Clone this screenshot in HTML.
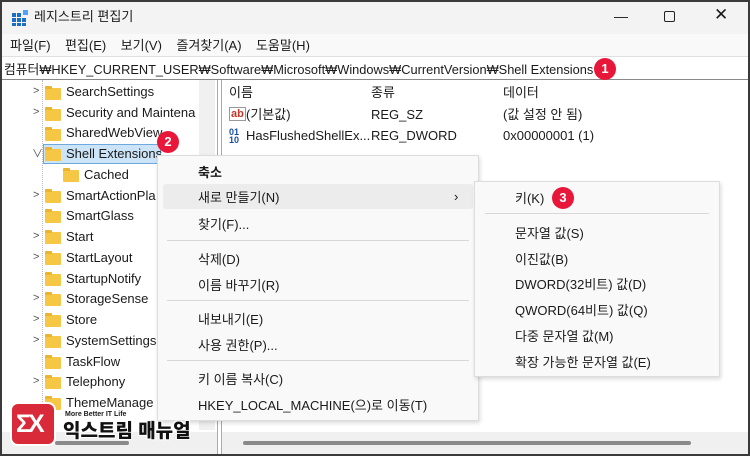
<!DOCTYPE html>
<html><head><meta charset="utf-8"><style>
*{margin:0;padding:0;box-sizing:border-box}
body{width:750px;height:456px;overflow:hidden;background:#3a3a3a;font-family:"Liberation Sans","Noto Sans CJK KR",sans-serif;font-size:13px;color:#1a1a1a;position:relative}
.win{position:absolute;left:2px;top:2px;width:746px;height:452px;background:#fff;overflow:hidden}
.a{position:absolute;white-space:nowrap;line-height:16px}
.fold{position:absolute;width:16px;height:12px;background:#f6c744;border-radius:1px}
.fold:before{content:"";position:absolute;left:0;top:-2px;width:7px;height:3px;background:#e9b430;border-radius:1px 1px 0 0}
.arr{position:absolute;color:#555;font-size:11px}
.badge{position:absolute;width:22px;height:22px;border-radius:50%;background:#e8173a;color:#fff;font-size:13px;font-weight:bold;text-align:center;line-height:22px}
.sep{position:absolute;height:1px;background:#d8d8d8}
</style></head><body>
<div class="win">
 <div style="position:absolute;left:0;top:0;width:746px;height:32px;background:#f3f3f3"></div>
 <svg style="position:absolute;left:9px;top:7px" width="18" height="18" viewBox="0 0 18 18"><g fill="#1a6fc4"><rect x="1" y="4" width="4" height="4"/><rect x="6" y="4" width="4" height="4"/><rect x="1" y="9" width="4" height="4"/><rect x="6" y="9" width="4" height="4"/><rect x="11" y="9" width="4" height="4"/><rect x="1" y="14" width="4" height="3"/><rect x="6" y="14" width="4" height="3"/><rect x="11" y="14" width="4" height="3"/></g><rect x="12" y="1" width="5" height="5" fill="#4aa3ff"/></svg>
 <div class="a" style="left:32px;top:7px;font-size:13px">레지스트리 편집기</div>
 <div class="a" style="left:612px;top:6px;font-size:14px">—</div>
 <div style="position:absolute;left:662px;top:9px;width:11px;height:11px;border:1.3px solid #222;border-radius:2px"></div>
 <div class="a" style="left:712px;top:5px;font-size:17px;font-weight:300">✕</div>
 <div style="position:absolute;left:0;top:32px;width:746px;height:22px;background:#f9f9f9"></div>
 <div class="a" style="left:8px;top:36px">파일(F)&nbsp;&nbsp;&nbsp; 편집(E)&nbsp;&nbsp;&nbsp; 보기(V)&nbsp;&nbsp;&nbsp; 즐겨찾기(A)&nbsp;&nbsp;&nbsp; 도움말(H)</div>
 <div style="position:absolute;left:0;top:54px;width:746px;height:1px;background:#e0e0e0"></div>
 <div class="a" style="left:2px;top:60px;font-size:12.8px">컴퓨터₩HKEY_CURRENT_USER₩Software₩Microsoft₩Windows₩CurrentVersion₩Shell Extensions</div>
 <div style="position:absolute;left:0;top:77px;width:746px;height:1px;background:#888"></div>
 <div style="position:absolute;left:197px;top:78px;width:16px;height:350px;background:#f0f0f0"></div>
 <div style="position:absolute;left:215px;top:78px;width:1px;height:374px;background:#aaa"></div>
 <div style="position:absolute;left:219px;top:78px;width:1px;height:374px;background:#aaa"></div>
 <div style="position:absolute;left:0;top:430px;width:215px;height:22px;background:#f0f0f0"></div>
 <div style="position:absolute;left:53px;top:439px;width:74px;height:4px;background:#8a8a8a;border-radius:2px"></div>
 <div style="position:absolute;left:220px;top:430px;width:526px;height:22px;background:#f0f0f0"></div>
 <div style="position:absolute;left:241px;top:439px;width:448px;height:4px;background:#8a8a8a;border-radius:2px"></div>
 <div style="position:absolute;left:40px;top:78px;width:1px;height:352px;border-left:1px dotted #bbb"></div>
 <div style="position:absolute;left:41px;top:142px;width:118px;height:20px;background:#cce4f7;border:1px solid #6ea8dc"></div>
 <div class="arr" style="left:31px;top:83px">&gt;</div><div class="fold" style="left:43px;top:86px"></div><div class="a" style="left:64px;top:82px">SearchSettings</div>
 <div class="arr" style="left:31px;top:104px">&gt;</div><div class="fold" style="left:43px;top:107px"></div><div class="a" style="left:64px;top:103px">Security and Maintena</div>
 <div class="fold" style="left:43px;top:127px"></div><div class="a" style="left:64px;top:123px">SharedWebView</div>
 <div class="arr" style="left:30px;top:143px">∨</div><div class="fold" style="left:43px;top:147px"></div><div class="a" style="left:64px;top:144px">Shell Extensions</div>
 <div class="fold" style="left:61px;top:168px"></div><div class="a" style="left:82px;top:165px">Cached</div>
 <div class="arr" style="left:31px;top:187px">&gt;</div><div class="fold" style="left:43px;top:189px"></div><div class="a" style="left:64px;top:186px">SmartActionPla</div>
 <div class="fold" style="left:43px;top:209px"></div><div class="a" style="left:64px;top:206px">SmartGlass</div>
 <div class="arr" style="left:31px;top:228px">&gt;</div><div class="fold" style="left:43px;top:230px"></div><div class="a" style="left:64px;top:227px">Start</div>
 <div class="arr" style="left:31px;top:249px">&gt;</div><div class="fold" style="left:43px;top:251px"></div><div class="a" style="left:64px;top:248px">StartLayout</div>
 <div class="fold" style="left:43px;top:272px"></div><div class="a" style="left:64px;top:269px">StartupNotify</div>
 <div class="arr" style="left:31px;top:290px">&gt;</div><div class="fold" style="left:43px;top:292px"></div><div class="a" style="left:64px;top:289px">StorageSense</div>
 <div class="arr" style="left:31px;top:311px">&gt;</div><div class="fold" style="left:43px;top:313px"></div><div class="a" style="left:64px;top:310px">Store</div>
 <div class="arr" style="left:31px;top:332px">&gt;</div><div class="fold" style="left:43px;top:334px"></div><div class="a" style="left:64px;top:331px">SystemSettings</div>
 <div class="fold" style="left:43px;top:355px"></div><div class="a" style="left:64px;top:352px">TaskFlow</div>
 <div class="arr" style="left:31px;top:373px">&gt;</div><div class="fold" style="left:43px;top:375px"></div><div class="a" style="left:64px;top:372px">Telephony</div>
 <div class="fold" style="left:43px;top:396px"></div><div class="a" style="left:64px;top:393px">ThemeManage</div>
 <div class="a" style="left:227px;top:83px">이름</div><div class="a" style="left:369px;top:83px">종류</div><div class="a" style="left:501px;top:83px">데이터</div>
 <div class="a" style="left:227px;top:105px;color:#c0392b;font-size:11px;font-weight:bold;border:1px solid #999;line-height:12px;padding:0 1px">ab</div>
 <div class="a" style="left:244px;top:105px">(기본값)</div><div class="a" style="left:369px;top:105px">REG_SZ</div><div class="a" style="left:501px;top:105px">(값 설정 안 됨)</div>
 <div class="a" style="left:227px;top:126px;color:#1a4fa0;font-size:9px;font-weight:bold;line-height:8px">01<br>10</div>
 <div class="a" style="left:244px;top:126px">HasFlushedShellEx...</div><div class="a" style="left:369px;top:126px">REG_DWORD</div><div class="a" style="left:501px;top:126px">0x00000001 (1)</div>
 <div style="position:absolute;left:155px;top:153px;width:322px;height:266px;background:#f9f9f9;border:1px solid #ddd;box-shadow:1px 2px 4px rgba(0,0,0,.15)"></div>
 <div style="position:absolute;left:161px;top:182px;width:310px;height:25px;background:#ececec;border-radius:3px"></div>
 <div class="a" style="left:196px;top:163px;font-weight:bold">축소</div>
 <div class="a" style="left:196px;top:188px">새로 만들기(N)</div>
 <div class="a" style="left:452px;top:187px">›</div>
 <div class="a" style="left:196px;top:215px">찾기(F)...</div>
 <div class="sep" style="left:165px;top:238px;width:302px"></div>
 <div class="a" style="left:196px;top:250px">삭제(D)</div>
 <div class="a" style="left:196px;top:276px">이름 바꾸기(R)</div>
 <div class="sep" style="left:165px;top:298px;width:302px"></div>
 <div class="a" style="left:196px;top:310px">내보내기(E)</div>
 <div class="a" style="left:196px;top:336px">사용 권한(P)...</div>
 <div class="sep" style="left:165px;top:358px;width:302px"></div>
 <div class="a" style="left:196px;top:370px">키 이름 복사(C)</div>
 <div class="a" style="left:196px;top:396px">HKEY_LOCAL_MACHINE(으)로 이동(T)</div>
 <div style="position:absolute;left:472px;top:179px;width:246px;height:196px;background:#f9f9f9;border:1px solid #ddd;box-shadow:1px 2px 4px rgba(0,0,0,.15)"></div>
 <div class="a" style="left:513px;top:189px">키(K)</div>
 <div class="sep" style="left:483px;top:211px;width:224px"></div>
 <div class="a" style="left:513px;top:224px">문자열 값(S)</div>
 <div class="a" style="left:513px;top:250px">이진값(B)</div>
 <div class="a" style="left:513px;top:275px">DWORD(32비트) 값(D)</div>
 <div class="a" style="left:513px;top:301px">QWORD(64비트) 값(Q)</div>
 <div class="a" style="left:513px;top:327px">다중 문자열 값(M)</div>
 <div class="a" style="left:513px;top:353px">확장 가능한 문자열 값(E)</div>
 <div class="badge" style="left:592px;top:56px">1</div>
 <div class="badge" style="left:155px;top:129px">2</div>
 <div class="badge" style="left:550px;top:185px">3</div>
 <div style="position:absolute;left:8px;top:400px;width:46px;height:44px;background:#d92a3a;border-radius:8px;border:2px solid #fff"></div>
 <div class="a" style="left:14px;top:409px;color:#fff;font-size:25px;font-weight:bold;line-height:26px;letter-spacing:-3px">ΣX</div>
 <div class="a" style="left:63px;top:408px;font-size:7px;font-weight:bold;line-height:9px">More Better IT Life</div>
 <div class="a" style="left:61px;top:418px;font-size:19px;font-weight:900;line-height:24px;color:#111;text-shadow:-1px -1px 0 #fff,1px -1px 0 #fff,-1px 1px 0 #fff,1px 1px 0 #fff">익스트림 매뉴얼</div>
</div>
</body></html>
